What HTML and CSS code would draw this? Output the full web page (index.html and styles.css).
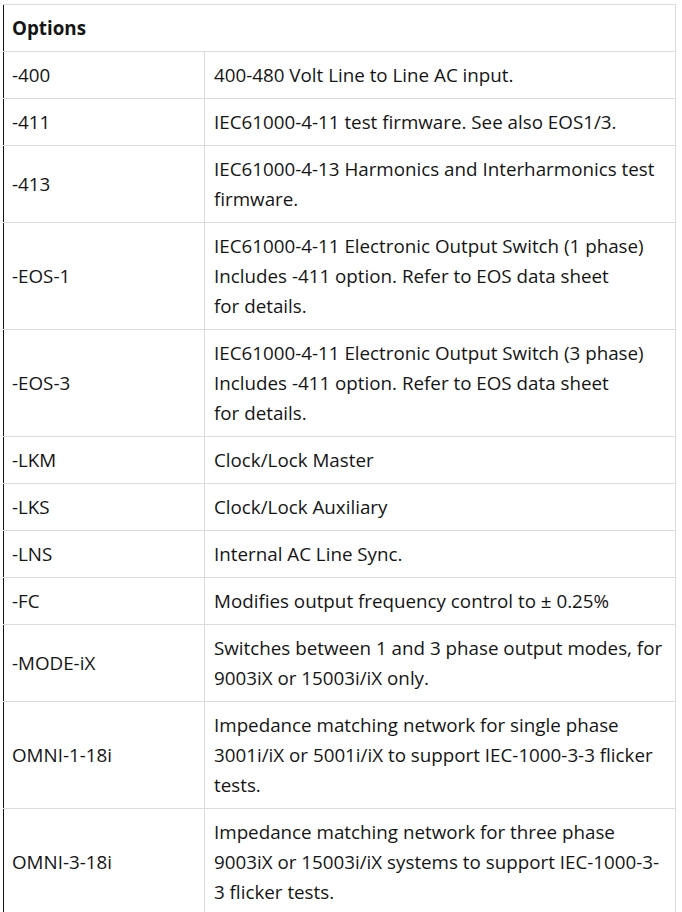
FILE: index.html
```html
<!DOCTYPE html>
<html>
<head>
<meta charset="utf-8">
<link rel="stylesheet" href="styles.css">
</head>
<body>
<table class="opts">
  <colgroup>
    <col class="c-code">
    <col class="c-desc">
  </colgroup>
  <thead>
    <tr><th colspan="2">Options</th></tr>
  </thead>
  <tbody>
    <tr><td>-400</td><td>400-480 Volt Line to Line AC input.</td></tr>
    <tr><td>-411</td><td>IEC61000-4-11 test firmware. See also EOS1/3.</td></tr>
    <tr><td>-413</td><td>IEC61000-4-13 Harmonics and Interharmonics test firmware.</td></tr>
    <tr><td>-EOS-1</td><td>IEC61000-4-11 Electronic Output Switch (1 phase)<br>Includes -411 option. Refer to EOS data sheet<br>for details.</td></tr>
    <tr><td>-EOS-3</td><td>IEC61000-4-11 Electronic Output Switch (3 phase)<br>Includes -411 option. Refer to EOS data sheet<br>for details.</td></tr>
    <tr><td>-LKM</td><td>Clock/Lock Master</td></tr>
    <tr><td>-LKS</td><td>Clock/Lock Auxiliary</td></tr>
    <tr><td>-LNS</td><td>Internal AC Line Sync.</td></tr>
    <tr><td>-FC</td><td>Modifies output frequency control to ± 0.25%</td></tr>
    <tr><td>-MODE-iX</td><td>Switches between 1 and 3 phase output modes, for 9003iX or 15003i/iX only.</td></tr>
    <tr><td>OMNI-1-18i</td><td>Impedance matching network for single phase 3001i/iX or 5001i/iX to support IEC-1000-3-3 flicker tests.</td></tr>
    <tr><td>OMNI-3-18i</td><td>Impedance matching network for three phase 9003iX or 15003i/iX systems to support IEC-1000-3-3 flicker tests.</td></tr>
  </tbody>
</table>
</body>
</html>
```
FILE: styles.css
```css
html, body {
  margin: 0;
  padding: 0;
  background: #fff;
}
body {
  padding: 4px 0 0 3px;
  font-family: "Open Sans", "Liberation Sans", sans-serif;
  font-size: 18.8px;
  line-height: 30px;
  color: #151515;
}
.opts {
  border-collapse: collapse;
  width: 673px;
  table-layout: fixed;
}
.c-code {
  width: 201px;
}
.opts th, .opts td {
  border: 1px solid #dcdcdc;
  padding: 8px 8px 8px 9px;
  text-align: left;
  vertical-align: middle;
}
.opts th {
  font-weight: 700;
}
.opts th:first-child,
.opts td:first-child {
  border-left: 1px solid #111;
  padding-left: 8px;
}
```
